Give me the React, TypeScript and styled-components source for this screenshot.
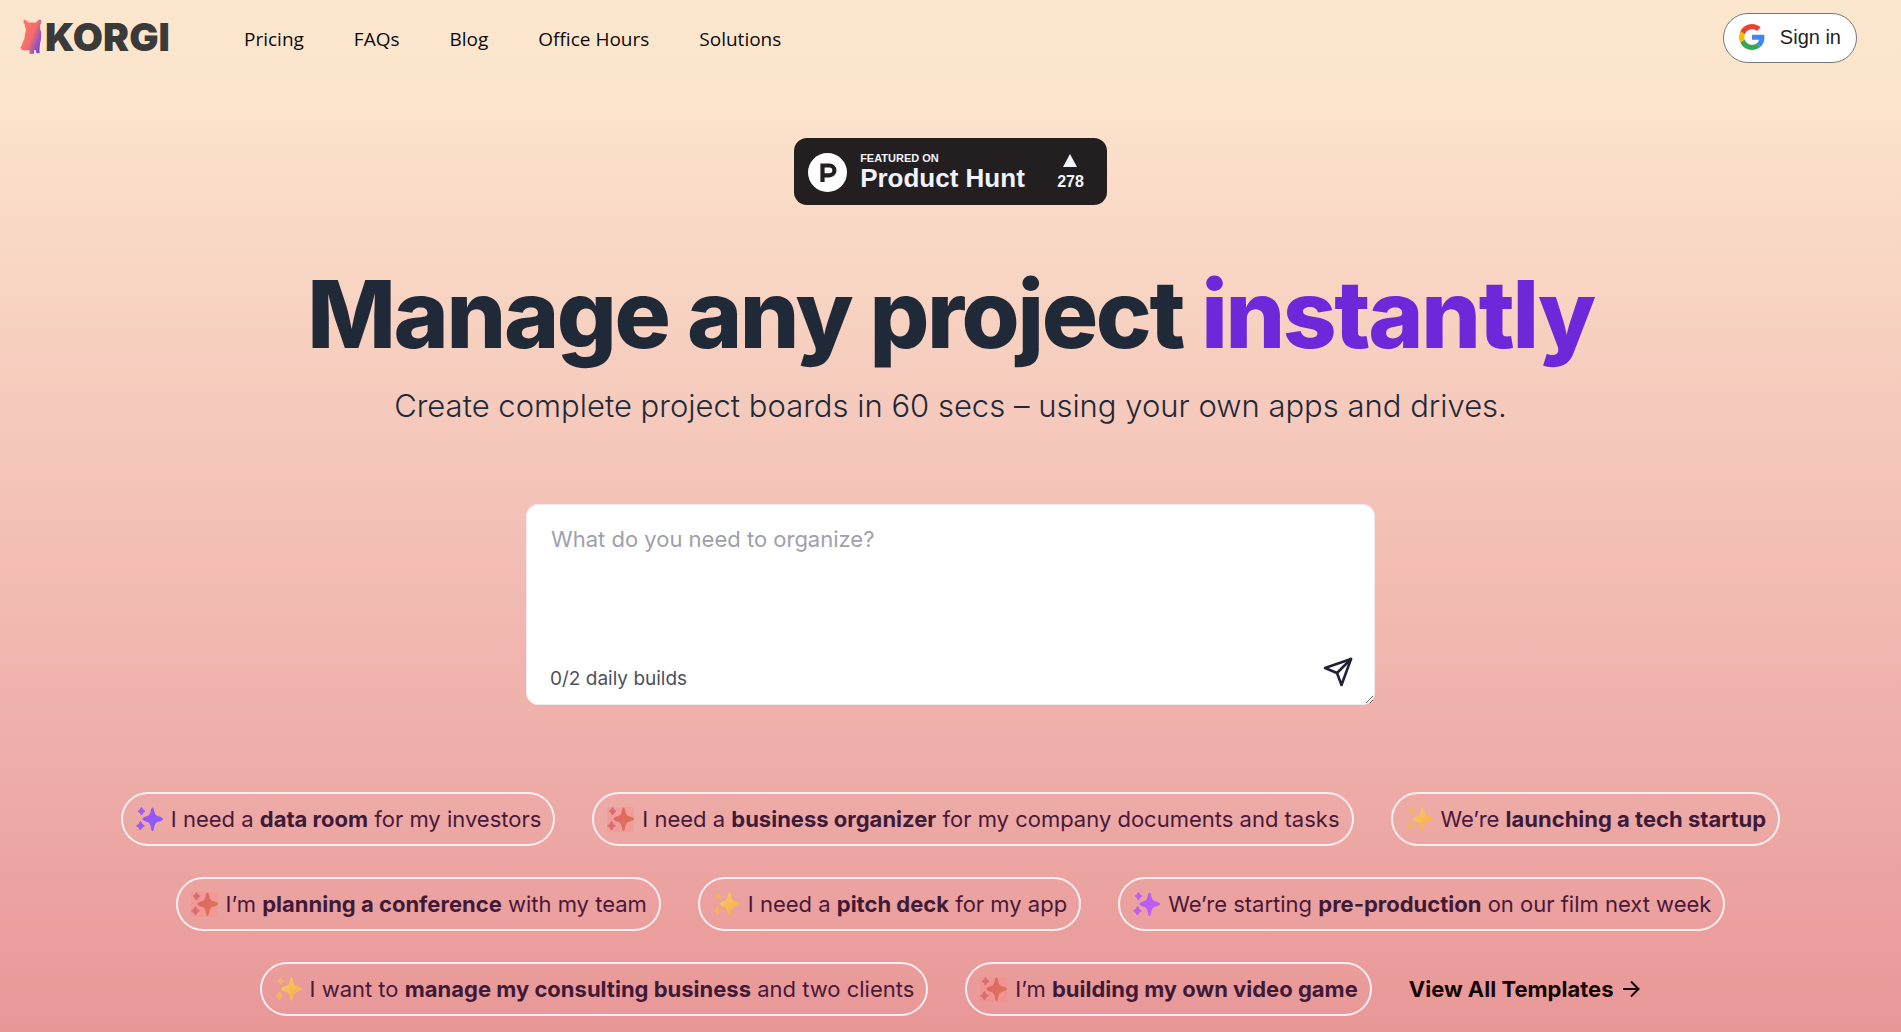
import React, { useState } from 'react';
import styled, { createGlobalStyle } from 'styled-components';

const inter = `Inter, "Liberation Sans", sans-serif`;

const GlobalStyle = createGlobalStyle`
  *, *::before, *::after { box-sizing: border-box; }
  body { margin: 0; font-family: ${inter}; color: #1f2937; background: #e89797; }
  button, textarea { font: inherit; color: inherit; margin: 0; }
  a { color: inherit; text-decoration: none; }
`;

const Page = styled.div`
  min-height: 100vh;
  background: linear-gradient(180deg, #fce6ce 0%, #fce5cd 8%, #f5c8bb 42%, #eeada8 74%, #e89797 100%);
`;

const Header = styled.header`
  display: flex;
  align-items: center;
  height: 76px;
  padding: 0 44px 0 20px;
`;

const Logo = styled.a`
  display: flex;
  align-items: center;
  gap: 3px;
  width: 150px;
  margin-right: 74px;
  padding-bottom: 2px;
  color: #3a3a3a;
  font: 900 39px/40px ${inter};
`;

const Nav = styled.nav`
  display: flex;
  gap: 50px;
  flex: 1;
  padding-top: 2px;
  font: 19px/28px "Open Sans", "Noto Sans", sans-serif;
  color: #0b0b0b;
`;

const SignIn = styled.button`
  display: flex;
  align-items: center;
  gap: 15px;
  height: 50px;
  padding: 0 15px 2px;
  border: 1px solid #747775;
  border-radius: 25px;
  background: #fff;
  color: #1f1f1f;
  font: 20px/24px "Liberation Sans", Arial, sans-serif;
  cursor: pointer;
`;

const Main = styled.main`
  display: flex;
  flex-direction: column;
  align-items: center;
  padding: 62px 24px 15px;
`;

const Badge = styled.a`
  display: flex;
  align-items: center;
  gap: 13px;
  height: 67px;
  padding: 1px 23px 0 14px;
  border-radius: 13px;
  background: #231f20;
  color: #f1f3ff;
  font-family: "Liberation Sans", Arial, sans-serif;
  font-weight: 700;
`;

const BadgeText = styled.span`
  display: flex;
  flex-direction: column;
  min-width: 168px;
  margin-right: 16px;
`;

const BadgeLabel = styled.span`
  font-size: 11px;
  line-height: 12px;
`;

const BadgeName = styled.span`
  font-size: 26px;
  line-height: 28px;
`;

const Votes = styled.span`
  display: flex;
  flex-direction: column;
  align-items: center;
  gap: 6px;
  font-size: 16px;
  line-height: 18px;
`;

const Title = styled.h1`
  margin: 61px 0 0;
  font-size: 94px;
  line-height: 96px;
  font-weight: 800;
  letter-spacing: -0.025em;
  text-align: center;
`;

const Accent = styled.span`
  color: #6d28d9;
`;

const Subtitle = styled.p`
  margin: 24px 0 0;
  font-size: 31px;
  line-height: 40px;
  font-weight: 300;
  text-align: center;
`;

const Prompt = styled.form`
  position: relative;
  width: 100%;
  max-width: 849px;
  margin-top: 78px;
`;

const PromptInput = styled.textarea`
  display: block;
  width: 100%;
  height: 201px;
  padding: 20px 24px;
  border: 1px solid #f3e8ee;
  border-radius: 12px;
  background: #fff;
  font-size: 22px;
  line-height: 28px;
  resize: vertical;
  outline: none;
  &::placeholder { color: #9f9fac; opacity: 1; }
`;

const Quota = styled.span`
  position: absolute;
  left: 24px;
  bottom: 12px;
  font-size: 19px;
  line-height: 28px;
  color: #4b5060;
`;

const Send = styled.button`
  position: absolute;
  right: 20px;
  bottom: 16px;
  display: flex;
  padding: 0;
  border: 0;
  background: none;
  color: #1f2233;
  cursor: pointer;
`;

const Chips = styled.div`
  display: flex;
  flex-wrap: wrap;
  justify-content: center;
  gap: 31px 37px;
  width: 100%;
  max-width: 1740px;
  margin-top: 87px;
`;

const Chip = styled.button`
  display: flex;
  align-items: center;
  gap: 7px;
  height: 54px;
  padding: 0 12px;
  border: 2px solid #fdeef2;
  border-radius: 27px;
  background: transparent;
  color: #4a1838;
  font-size: 22px;
  line-height: 28px;
  cursor: pointer;
  b { font-weight: 700; color: #3f1a38; }
`;

const ViewAll = styled.a`
  display: flex;
  align-items: center;
  gap: 8px;
  font-size: 22px;
  font-weight: 700;
  color: #170406;
`;

type Tone = 'violet' | 'orchid' | 'coral' | 'gold';

const tones: Record<Tone, [string, string, string]> = {
  violet: ['#a04ff5', '#8560ff', '#9a5cf5'],
  orchid: ['#b45cff', '#c45cf0', '#c05cf5'],
  coral: ['#e0626a', '#dc7850', '#d86e70'],
  gold: ['#fbcd62', '#f3a850', '#f3b265'],
};

function Sparkles({ tone }: { tone: Tone }) {
  const [from, to, small] = tones[tone];
  const id = `sparkle-${tone}`;
  return (
    <svg width="29" height="28" viewBox="0 0 29 28" aria-hidden="true">
      <defs>
        <linearGradient id={id} x1="0" y1="0" x2="1" y2="1">
          <stop offset="0" stopColor={from} />
          <stop offset="1" stopColor={to} />
        </linearGradient>
      </defs>
      {tone === 'coral' && <rect x="1" y="2" width="27" height="25" rx="2" fill="#ff8888" opacity="0.35" />}
      <path
        d="M17.500 2.500c1.300 0 1.400 2.500 2.200 5.300.6 2 1.500 2.900 3.500 3.500 2.600.8 4.800 1.300 4.800 2.700s-2.200 1.900-4.800 2.700c-2 .6-2.900 1.500-3.500 3.500-.8 2.800-.9 5.800-2.200 5.800s-1.400-3-2.200-5.800c-.6-2-1.500-2.900-3.500-3.500-2.600-.8-4.300-1.300-4.300-2.700s1.700-1.900 4.300-2.700c2-.6 2.900-1.500 3.500-3.500.8-2.800.9-5.300 2.200-5.300z"
        fill={`url(#${id})`}
      />
      <path d="M6.500 2.500c.7 0 .7 2.900 3.500 3.700-2.800.8-2.800 3.800-3.500 3.800S5.800 7 3 6.200c2.800-.8 2.800-3.700 3.500-3.700z" fill={small} stroke={small} strokeLinejoin="round" />
      <path d="M5.500 16.500c.8 0 .8 3.400 4 4.300-3.200.9-3.200 4.200-4 4.200s-.8-3.300-4-4.200c3.200-.9 3.200-4.300 4-4.300z" fill={small} stroke={small} strokeLinejoin="round" />
    </svg>
  );
}

function Corgi() {
  return (
    <svg width="22" height="36" viewBox="0 0 22 36" aria-hidden="true">
      <defs>
        <linearGradient id="corgi" x1="0.200" y1="0.300" x2="1" y2="0.850">
          <stop offset="0" stopColor="#fb7567" />
          <stop offset="0.400" stopColor="#f56c6c" />
          <stop offset="0.750" stopColor="#9a54b8" />
          <stop offset="1" stopColor="#6a4fd0" />
        </linearGradient>
      </defs>
      <path
        d="M3.500 1.500C3.700.6 5 .6 6 1.200l3 2.600c2-.5 4.500-.5 6.500 0l3-2.800c1-.7 2.300-.6 2.600.4.300 1.800-.4 3.600-1.200 5.100.3 1.500.5 3 .2 4.300.9 1 1.300 2.500 1.100 4.200.2 3.200-.2 6-1 8.800-.4 2.600-.6 5-.7 7.700l.2 2.700h-3.200l-1-3.300h-1.300l-.2 3.800H9.600l-.2-3.500-1.400-.2c-2 .8-4.800.8-6.500-.4-1.500-1.200-1.300-2.800.2-3.800.8-2.200 1.200-4.600 2.600-6.600.4-2.200.5-4.400 1-6.500.3-1.400.8-2.500.9-3.700-1.100-1.300-1.500-2.500-1.200-4C4 4.500 3.300 3 3.500 1.500z"
        fill="url(#corgi)"
      />
    </svg>
  );
}

function GoogleMark() {
  return (
    <svg width="26" height="26" viewBox="0 0 48 48" aria-hidden="true">
      <path fill="#EA4335" d="M24 9.500c3.540 0 6.710 1.220 9.210 3.600l6.850-6.850C35.900 2.380 30.470 0 24 0 14.620 0 6.510 5.380 2.560 13.220l7.980 6.190C12.430 13.720 17.740 9.500 24 9.500z" />
      <path fill="#4285F4" d="M46.980 24.550c0-1.570-.15-3.090-.38-4.550H24v9.020h12.940c-.58 2.960-2.260 5.480-4.780 7.180l7.730 6c4.510-4.180 7.090-10.360 7.090-17.650z" />
      <path fill="#FBBC05" d="M10.530 28.590c-.48-1.450-.76-2.990-.76-4.590s.27-3.140.76-4.590l-7.980-6.190C.92 16.460 0 20.120 0 24c0 3.880.92 7.540 2.560 10.780l7.970-6.190z" />
      <path fill="#34A853" d="M24 48c6.480 0 11.930-2.130 15.890-5.810l-7.730-6c-2.150 1.450-4.920 2.300-8.160 2.300-6.260 0-11.570-4.220-13.470-9.910l-7.980 6.190C6.510 42.620 14.620 48 24 48z" />
    </svg>
  );
}

const links = ['Pricing', 'FAQs', 'Blog', 'Office Hours', 'Solutions'];

const templates: { tone: Tone; before: string; strong: string; after?: string }[] = [
  { tone: 'violet', before: 'I need a ', strong: 'data room', after: ' for my investors' },
  { tone: 'coral', before: 'I need a ', strong: 'business organizer', after: ' for my company documents and tasks' },
  { tone: 'gold', before: 'We’re ', strong: 'launching a tech startup' },
  { tone: 'coral', before: 'I’m ', strong: 'planning a conference', after: ' with my team' },
  { tone: 'gold', before: 'I need a ', strong: 'pitch deck', after: ' for my app' },
  { tone: 'orchid', before: 'We’re starting ', strong: 'pre-production', after: ' on our film next week' },
  { tone: 'gold', before: 'I want to ', strong: 'manage my consulting business', after: ' and two clients' },
  { tone: 'coral', before: 'I’m ', strong: 'building my own video game' },
];

export default function App() {
  const [prompt, setPrompt] = useState('');
  return (
    <Page>
      <GlobalStyle />
      <Header>
        <Logo href="#">
          <Corgi />
          <span>KORGI</span>
        </Logo>
        <Nav>
          {links.map((label) => (
            <a key={label} href="#">{label}</a>
          ))}
        </Nav>
        <SignIn type="button">
          <GoogleMark />
          Sign in
        </SignIn>
      </Header>
      <Main>
        <Badge href="#">
          <svg width="39" height="39" viewBox="0 0 39 39" aria-hidden="true">
            <circle cx="19.500" cy="19.500" r="19.500" fill="#fff" />
            <path d="M14.500 29V12.500h7a4.900 4.900 0 0 1 0 9.800h-7" fill="none" stroke="#231f20" strokeWidth="4.200" />
          </svg>
          <BadgeText>
            <BadgeLabel>FEATURED ON</BadgeLabel>
            <BadgeName>Product Hunt</BadgeName>
          </BadgeText>
          <Votes>
            <svg width="14" height="13" viewBox="0 0 14 13" aria-hidden="true">
              <path d="M7 0l7 13H0z" fill="currentColor" />
            </svg>
            278
          </Votes>
        </Badge>
        <Title>
          Manage any project <Accent>instantly</Accent>
        </Title>
        <Subtitle>Create complete project boards in 60 secs – using your own apps and drives.</Subtitle>
        <Prompt onSubmit={(e) => e.preventDefault()}>
          <PromptInput
            aria-label="What do you need to organize?"
            placeholder="What do you need to organize?"
            value={prompt}
            onChange={(e) => setPrompt(e.target.value)}
          />
          <Quota>0/2 daily builds</Quota>
          <Send type="submit" aria-label="Send">
            <svg width="34" height="34" viewBox="0 0 34 34" fill="none" stroke="currentColor" strokeWidth="2.600" strokeLinejoin="round" strokeLinecap="round" aria-hidden="true">
              <path d="M30 4L4 13l12 5 4.500 12z" />
              <path d="M30 4L16 18" />
            </svg>
          </Send>
        </Prompt>
        <Chips>
          {templates.map((t) => (
            <Chip key={t.strong} type="button">
              <Sparkles tone={t.tone} />
              <span>
                {t.before}
                <b>{t.strong}</b>
                {t.after}
              </span>
            </Chip>
          ))}
          <ViewAll href="#">
            View All Templates
            <svg width="20" height="20" viewBox="0 0 20 20" fill="none" stroke="currentColor" strokeWidth="2" aria-hidden="true">
              <path d="M2 10h15M10 2.500l7.500 7.500-7.500 7.500" />
            </svg>
          </ViewAll>
        </Chips>
      </Main>
    </Page>
  );
}
